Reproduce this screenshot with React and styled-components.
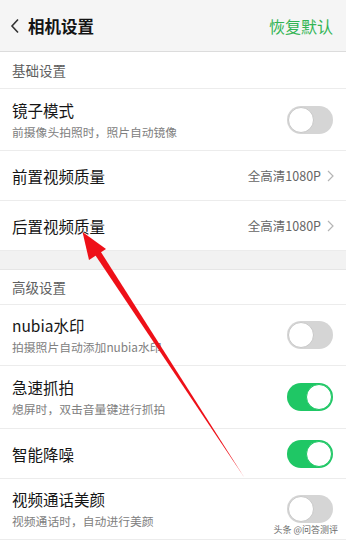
import React from 'react'
import styled, { createGlobalStyle } from 'styled-components'

const GlobalStyle = createGlobalStyle`
  html, body {
    margin: 0;
    padding: 0;
    background: #ffffff;
    font-family: "Noto Sans CJK SC", "Noto Sans", sans-serif;
  }
`

const Page = styled.div`
  position: relative;
  width: 346px;
  height: 542px;
  overflow: hidden;
  background: #ffffff;
`

const Header = styled.div`
  height: 51px;
  display: flex;
  align-items: center;
  padding: 0 13px 0 10px;
  background: #f5f5f5;
  border-bottom: 1px solid #dcdcdc;
`

const Back = styled.span`
  display: flex;
  align-items: center;
  margin-right: 8px;
`

const Title = styled.h1`
  flex: 1;
  margin: 0;
  font-size: 16.5px;
  font-weight: 700;
  color: #141414;
`

const Reset = styled.span`
  font-size: 16px;
  color: #33b454;
`

const SectionLabel = styled.div`
  height: ${p => p.$h}px;
  display: flex;
  align-items: center;
  padding-left: 12px;
  font-size: 13.5px;
  color: #606060;
  border-bottom: 1px solid #ececec;
  box-sizing: border-box;
`

const Gap = styled.div`
  height: 18px;
  background: #f2f2f2;
  border-bottom: 1px solid #e6e6e6;
`

const Row = styled.div`
  height: ${p => p.$h}px;
  display: flex;
  align-items: center;
  padding: 0 12px;
  border-bottom: 1px solid #ececec;
  box-sizing: border-box;
`

const Texts = styled.div`
  flex: 1;
  display: flex;
  flex-direction: column;
  gap: 4px;
`

const Name = styled.div`
  font-size: 15.5px;
  color: #151515;
  line-height: 20px;
`

const Sub = styled.div`
  font-size: 11.8px;
  color: #808080;
  line-height: 16px;
`

const Value = styled.span`
  font-size: 12.5px;
  color: #666666;
  margin-right: 6px;
`

const Track = styled.span`
  position: relative;
  width: 46px;
  height: 28px;
  border-radius: 14px;
  background: ${p => (p.$on ? '#1fc765' : '#d5d5d5')};
  flex-shrink: 0;
  margin-right: 1px;
`

const Knob = styled.span`
  position: absolute;
  top: 1px;
  left: ${p => (p.$on ? '19px' : '1px')};
  width: 26px;
  height: 26px;
  border-radius: 50%;
  background: #ffffff;
  box-sizing: border-box;
  border: 1px solid ${p => (p.$on ? '#1fc765' : '#c8c8c8')};
`

const Mark = styled.div`
  position: absolute;
  right: 8px;
  bottom: 6px;
  font-size: 9px;
  color: #6a6a6a;
`

const Overlay = styled.svg`
  position: absolute;
  left: 0;
  top: 0;
  pointer-events: none;
`

const Toggle = ({ on }) => (
  <Track $on={on}>
    <Knob $on={on} />
  </Track>
)

const Chevron = () => (
  <svg width='7' height='12' viewBox='0 0 7 12'>
    <path d='M1 1l5 5-5 5' fill='none' stroke='#b5b5b5' strokeWidth='1.2' />
  </svg>
)

const SwitchRow = ({ name, sub, on, h }) => (
  <Row $h={h}>
    <Texts>
      <Name>{name}</Name>
      {sub && <Sub>{sub}</Sub>}
    </Texts>
    <Toggle on={on} />
  </Row>
)

const LinkRow = ({ name, value }) => (
  <Row $h={50}>
    <Texts>
      <Name>{name}</Name>
    </Texts>
    <Value>{value}</Value>
    <Chevron />
  </Row>
)

const App = () => (
  <Page>
    <GlobalStyle />
    <Header>
      <Back>
        <svg width='10' height='16' viewBox='0 0 10 16'>
          <path d='M8 1.5L2 8l6 6.5' fill='none' stroke='#333' strokeWidth='1.6' />
        </svg>
      </Back>
      <Title>相机设置</Title>
      <Reset>恢复默认</Reset>
    </Header>
    <SectionLabel $h={37}>基础设置</SectionLabel>
    <SwitchRow name='镜子模式' sub='前摄像头拍照时，照片自动镜像' h={62} />
    <LinkRow name='前置视频质量' value='全高清1080P' />
    <LinkRow name='后置视频质量' value='全高清1080P' />
    <Gap />
    <SectionLabel $h={35}>高级设置</SectionLabel>
    <SwitchRow name='nubia水印' sub='拍摄照片自动添加nubia水印' h={61} />
    <SwitchRow name='急速抓拍' sub='熄屏时，双击音量键进行抓拍' on h={63} />
    <SwitchRow name='智能降噪' on h={50} />
    <SwitchRow name='视频通话美颜' sub='视频通话时，自动进行美颜' h={61} />
    <Mark>头条 @问答测评</Mark>
    <Overlay width='346' height='542' viewBox='0 0 346 542'>
      <polygon points='93.5,252.5 99,249 244,477' fill='#ee1018' />
      <polygon points='82.5,232 106,249 89,260' fill='#ee1018' />
    </Overlay>
  </Page>
)

export default App
